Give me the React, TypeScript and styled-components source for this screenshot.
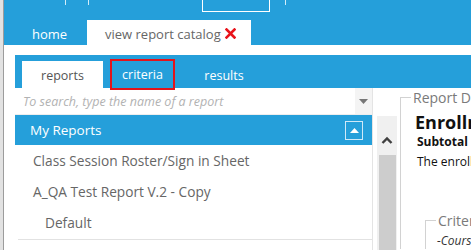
import styled, { createGlobalStyle } from 'styled-components';

const BLUE = '#259fda';

const GlobalStyle = createGlobalStyle`
  html, body {
    margin: 0;
    padding: 0;
    width: 471px;
    height: 250px;
    overflow: hidden;
    background: #fff;
  }
  body {
    font-family: 'Open Sans', 'Noto Sans', sans-serif;
  }
`;

const Frame = styled.div`
  display: flex;
  width: 471px;
  height: 250px;
  overflow: hidden;
`;

const SideStrip = styled.div`
  flex: 0 0 3px;
  background: #e2e2e2;
  border-right: 1px solid #9c9c9c;
`;

const Main = styled.div`
  flex: 1;
  min-width: 0;
  display: flex;
  flex-direction: column;
`;

const TopBar = styled.div`
  height: 45px;
  background: ${BLUE};
  display: flex;
  flex-direction: column;
  justify-content: space-between;
`;

const Toolbar = styled.div`
  height: 12px;
  display: flex;
  align-items: flex-start;
`;

const Tick = styled.span<{ $left: number }>`
  margin-left: ${({ $left }) => $left}px;
  width: 1px;
  height: 5px;
  background: rgba(255, 255, 255, 0.8);
`;

const ToolBox = styled.span<{ $left: number }>`
  margin-left: ${({ $left }) => $left}px;
  width: 66px;
  height: 11px;
  border: 1px solid #fff;
  border-top: none;
`;

const TabRow = styled.div`
  height: 25px;
  display: flex;
  align-items: stretch;
`;

const AppTab = styled.div<{ $active?: boolean }>`
  display: flex;
  align-items: center;
  gap: 4px;
  padding: 2px 0 0 ${({ $active }) => ($active ? 18 : 28)}px;
  width: ${({ $active }) => ($active ? 164 : 83)}px;
  box-sizing: border-box;
  font-size: 13px;
  color: ${({ $active }) => ($active ? '#666' : '#fff')};
  background: ${({ $active }) => ($active ? '#fff' : 'transparent')};
`;

const Content = styled.div`
  flex: 1;
  padding: 10px 0 0 11px;
  display: flex;
  flex-direction: column;
  min-height: 0;
`;

const InnerTabs = styled.div`
  height: 33px;
  background: ${BLUE};
  display: flex;
  align-items: flex-end;
  padding-left: 7px;
`;

const InnerTab = styled.div<{ $active?: boolean; $marked?: boolean; $width: number; $ml?: number }>`
  width: ${({ $width }) => $width}px;
  margin-left: ${({ $ml }) => $ml ?? 0}px;
  height: ${({ $marked }) => ($marked ? 31 : 27)}px;
  margin-bottom: ${({ $marked }) => ($marked ? -2 : 0)}px;
  box-sizing: border-box;
  display: flex;
  align-items: center;
  justify-content: center;
  padding-top: ${({ $marked }) => ($marked ? 0 : 1)}px;
  font-size: 12.5px;
  color: ${({ $active }) => ($active ? '#555' : '#fff')};
  background: ${({ $active }) => ($active ? '#fff' : 'transparent')};
  border: ${({ $marked }) => ($marked ? '2px solid #e3141b' : 'none')};
`;

const Body = styled.div`
  flex: 1;
  display: grid;
  grid-template-columns: 358px 20px 220px;
  column-gap: 4px;
  min-height: 0;
  overflow: hidden;
`;

const ListColumn = styled.div`
  display: flex;
  flex-direction: column;
  border-right: 1px solid #e4e4e4;
`;

const Search = styled.div`
  height: 27px;
  display: flex;
  align-items: center;
  border-bottom: 1px solid #eee;
  box-sizing: border-box;
`;

const SearchText = styled.span`
  flex: 1;
  padding-left: 8px;
  font-size: 12.5px;
  font-style: italic;
  color: #b2b2b2;
  white-space: nowrap;
`;

const DropButton = styled.span`
  width: 17px;
  align-self: stretch;
  display: flex;
  align-items: center;
  justify-content: center;
  background: #f4f4f4;
`;

const GroupHeader = styled.div`
  height: 30px;
  background: ${BLUE};
  display: flex;
  align-items: center;
  justify-content: space-between;
  padding: 0 9px 0 15px;
  font-size: 13.5px;
  color: #fff;
`;

const CollapseButton = styled.span`
  width: 16px;
  height: 17px;
  border: 1px solid #cfe9f8;
  display: flex;
  align-items: center;
  justify-content: center;
`;

const ListItem = styled.div<{ $indent?: number }>`
  height: 31px;
  display: flex;
  align-items: center;
  padding-left: ${({ $indent }) => 18 + ($indent ?? 0)}px;
  font-size: 13.7px;
  color: #666;
  white-space: nowrap;
`;

const ListEnd = styled.div`
  margin: 1px 0 0 3px;
  border-top: 1px solid #e2e2e2;
`;

const ScrollBar = styled.div`
  margin-top: 28px;
  background: #f0f0f0;
  display: flex;
  flex-direction: column;
  align-items: center;
`;

const ScrollUp = styled.div`
  height: 39px;
  width: 100%;
  display: flex;
  align-items: flex-end;
  justify-content: center;
  padding-bottom: 11px;
  box-sizing: border-box;
`;

const Thumb = styled.div`
  flex: 1;
  width: 17px;
  background: #cdcdcd;
`;

const DetailColumn = styled.div`
  margin-left: -1px;
  white-space: nowrap;
`;

const Group = styled.div<{ $top: number; $left?: number }>`
  margin: ${({ $top }) => $top}px 0 0 ${({ $left }) => $left ?? 0}px;
  padding-left: 14px;
  border-top: 1px solid #d2d2d2;
  border-left: 1px solid #d2d2d2;
`;

const Legend = styled.div`
  width: fit-content;
  margin: -9px 0 0 -4px;
  padding: 0 2px;
  background: #fff;
  font-size: 14px;
  line-height: 18px;
  color: #7a7a7a;
`;

const Title = styled.div`
  font-size: 18px;
  font-weight: 700;
  color: #111;
  line-height: 20px;
  margin-top: 5px;
`;

const Subtitle = styled.div`
  font-size: 12px;
  font-weight: 700;
  color: #111;
  line-height: 16px;
  margin: 2px 0 0 2px;
`;

const Description = styled.div`
  font-size: 12px;
  color: #111;
  line-height: 16px;
  margin: 4px 0 0 2px;
`;

const CriteriaText = styled.div`
  font-size: 12px;
  line-height: 16px;
  font-style: italic;
  color: #333;
  margin: 3px 0 0 -3px;
`;

const CloseIcon = () => (
  <svg width="11" height="11" viewBox="0 0 11 11">
    <path d="M1.5 1.5 L9.5 9.5 M9.5 1.5 L1.5 9.5" stroke="#e8141b" strokeWidth="2.6" strokeLinecap="square" />
  </svg>
);

const App = () => (
  <>
    <GlobalStyle />
    <Frame>
      <SideStrip />
      <Main>
        <TopBar>
          <Toolbar>
            <Tick $left={61} />
            <Tick $left={22} />
            <ToolBox $left={113} />
            <Tick $left={15} />
          </Toolbar>
          <TabRow>
            <AppTab>home</AppTab>
            <AppTab $active>
              view report catalog
              <CloseIcon />
            </AppTab>
          </TabRow>
        </TopBar>
        <Content>
          <InnerTabs>
            <InnerTab $active $width={81}>reports</InnerTab>
            <InnerTab $marked $width={65} $ml={7}>criteria</InnerTab>
            <InnerTab $width={70} $ml={14}>results</InnerTab>
          </InnerTabs>
          <Body>
            <ListColumn>
              <Search>
                <SearchText>To search, type the name of a report</SearchText>
                <DropButton>
                  <svg width="9" height="5" viewBox="0 0 9 5">
                    <path d="M0 0 H9 L4.5 5 Z" fill="#777" />
                  </svg>
                </DropButton>
              </Search>
              <GroupHeader>
                My Reports
                <CollapseButton>
                  <svg width="9" height="5" viewBox="0 0 9 5">
                    <path d="M0 5 H9 L4.5 0 Z" fill="#fff" />
                  </svg>
                </CollapseButton>
              </GroupHeader>
              <ListItem>Class Session Roster/Sign in Sheet</ListItem>
              <ListItem>A_QA Test Report V.2 - Copy</ListItem>
              <ListItem $indent={12}>Default</ListItem>
              <ListEnd />
            </ListColumn>
            <ScrollBar>
              <ScrollUp>
                <svg width="12" height="8" viewBox="0 0 12 8">
                  <path d="M1.5 7 L6 2.5 L10.5 7" stroke="#404040" strokeWidth="2.4" fill="none" />
                </svg>
              </ScrollUp>
              <Thumb />
            </ScrollBar>
            <DetailColumn>
              <Group $top={9}>
                <Legend>Report Description</Legend>
                <Title>Enrollment Summary</Title>
                <Subtitle>Subtotal by Course</Subtitle>
                <Description>The enrollment summary report</Description>
                <Group $top={50} $left={10}>
                  <Legend>Criteria</Legend>
                  <CriteriaText>-Course</CriteriaText>
                </Group>
              </Group>
            </DetailColumn>
          </Body>
        </Content>
      </Main>
    </Frame>
  </>
);

export default App;
